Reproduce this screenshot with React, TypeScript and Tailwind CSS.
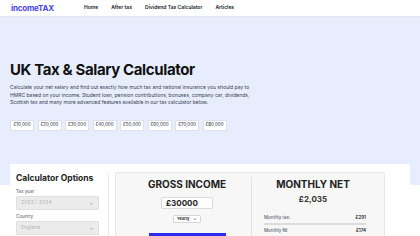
import React from 'react';

const amounts = ['£10,000', '£20,000', '£30,000', '£40,000', '£50,000', '£60,000', '£70,000', '£80,000'];

function Chevron() {
    return (
        <svg className="w-[5px] h-[5px] text-gray-400" viewBox="0 0 10 10" fill="none" stroke="currentColor" strokeWidth="1.5">
            <path d="M2 4l3 3 3-3" />
        </svg>
    );
}

export default function App() {
    return (
        <div className="w-[420px] h-[236px] overflow-hidden bg-white font-['Inter',sans-serif] text-gray-900">
            {/* Top nav */}
            <nav className="h-[17px] flex items-center bg-white border-b border-[#e3e6ee] pl-[11px]">
                <span className="w-[73px] text-[8px] font-bold text-[#4646ee] tracking-tight">incomeTAX</span>
                <div className="flex items-center gap-[13px] text-[5px] font-semibold text-gray-900">
                    <span>Home</span>
                    <span>After tax</span>
                    <span>Dividend Tax Calculator</span>
                    <span>Articles</span>
                </div>
            </nav>

            {/* Hero */}
            <div className="bg-[#e8edfe] h-[168px] px-[10px] pt-[44px]">
                <h1 className="text-[15px] leading-[18px] font-bold tracking-tight text-[#111]">UK Tax &amp; Salary Calculator</h1>
                <p className="mt-[5px] w-[252px] text-[5px] leading-[7.5px] text-gray-700">
                    Calculate your net salary and find out exactly how much tax and national insurance you should pay to
                    HMRC based on your income. Student loan, pension contributions, bonuses, company car, dividends,
                    Scottish tax and many more advanced features available in our tax calculator below.
                </p>
                <div className="mt-[13px] flex gap-[3.5px]">
                    {amounts.map((a) => (
                        <button
                            key={a}
                            className="h-[11px] w-[24px] flex items-center justify-center bg-white border border-[#dde0e8] rounded-[1px] text-[4.5px] text-gray-800"
                        >
                            {a}
                        </button>
                    ))}
                </div>
            </div>

            {/* Calculator container */}
            <div className="relative -mt-[21px] mx-[10px] w-[400px] bg-white flex pl-[6px] pt-[9px]">
                {/* Options column */}
                <div className="w-[83px]">
                    <h2 className="text-[8.5px] leading-[11px] font-bold text-[#222]">Calculator Options</h2>
                    <div className="mt-[5px] text-[4.5px] leading-[6px] text-gray-600">Tax year</div>
                    <div className="mt-[1px] h-[14px] bg-[#ebebeb] border border-[#e0e0e0] rounded-[1px] flex items-center justify-between px-[4px]">
                        <span className="text-[5px] text-[#b5b5b5] tracking-wide">2023 / 2024</span>
                        <Chevron />
                    </div>
                    <div className="mt-[4px] text-[4.5px] leading-[6px] text-gray-600">Country</div>
                    <div className="mt-[1px] h-[14px] bg-[#ebebeb] border border-[#e0e0e0] rounded-[1px] flex items-center justify-between px-[4px]">
                        <span className="text-[5px] text-[#b5b5b5]">England</span>
                        <Chevron />
                    </div>
                </div>

                <div className="ml-[9px] w-px h-[80px] bg-[#ececec]" />

                {/* Result card */}
                <div className="ml-[6px] mt-[-1px] w-[270px] h-[90px] bg-[#f7f7f7] border border-[#e6e6e6] rounded-[2px] flex">
                    <div className="w-[135px] flex flex-col items-center pt-[5px] pl-[7px]">
                        <div className="text-[10px] leading-[12px] font-bold text-[#222]">GROSS INCOME</div>
                        <div className="mt-[7px] w-[52px] h-[12px] bg-white border border-[#dcdcdc] rounded-[1px] flex items-center px-[4px] text-[8px] font-bold text-[#222]">
                            £30000
                        </div>
                        <div className="mt-[6px] w-[28px] h-[8px] bg-white border border-[#d6d6d6] rounded-[1px] flex items-center justify-between px-[3px]">
                            <span className="text-[4px] font-bold text-[#333]">Yearly</span>
                            <svg className="w-[4px] h-[4px] text-gray-600" viewBox="0 0 10 10" fill="none" stroke="currentColor" strokeWidth="1.8">
                                <path d="M2 4l3 3 3-3" />
                            </svg>
                        </div>
                        <div className="mt-[10px] w-[77px] h-[14px] bg-[#2b2bef]" />
                    </div>
                    <div className="w-px bg-[#e3e3e3] my-[4px]" />
                    <div className="flex-1 flex flex-col pt-[5px] pl-[12px] pr-[18px]">
                        <div className="text-center text-[10px] leading-[12px] font-bold text-[#222] pr-[4px]">MONTHLY NET</div>
                        <div className="text-center mt-[4px] text-[8px] leading-[10px] font-bold text-[#333] pr-[4px]">£2,035</div>
                        <div className="mt-[11px] flex justify-between text-[4.5px] leading-[6px] text-gray-700">
                            <span>Monthly tax:</span>
                            <span className="font-semibold text-[#222]">£291</span>
                        </div>
                        <div className="mt-[2px] h-[1.5px] bg-[#dcdcdc]" />
                        <div className="mt-[3px] flex justify-between text-[4.5px] leading-[6px] text-gray-700">
                            <span>Monthly NI:</span>
                            <span className="font-semibold text-[#222]">£174</span>
                        </div>
                    </div>
                </div>
            </div>
        </div>
    );
}
